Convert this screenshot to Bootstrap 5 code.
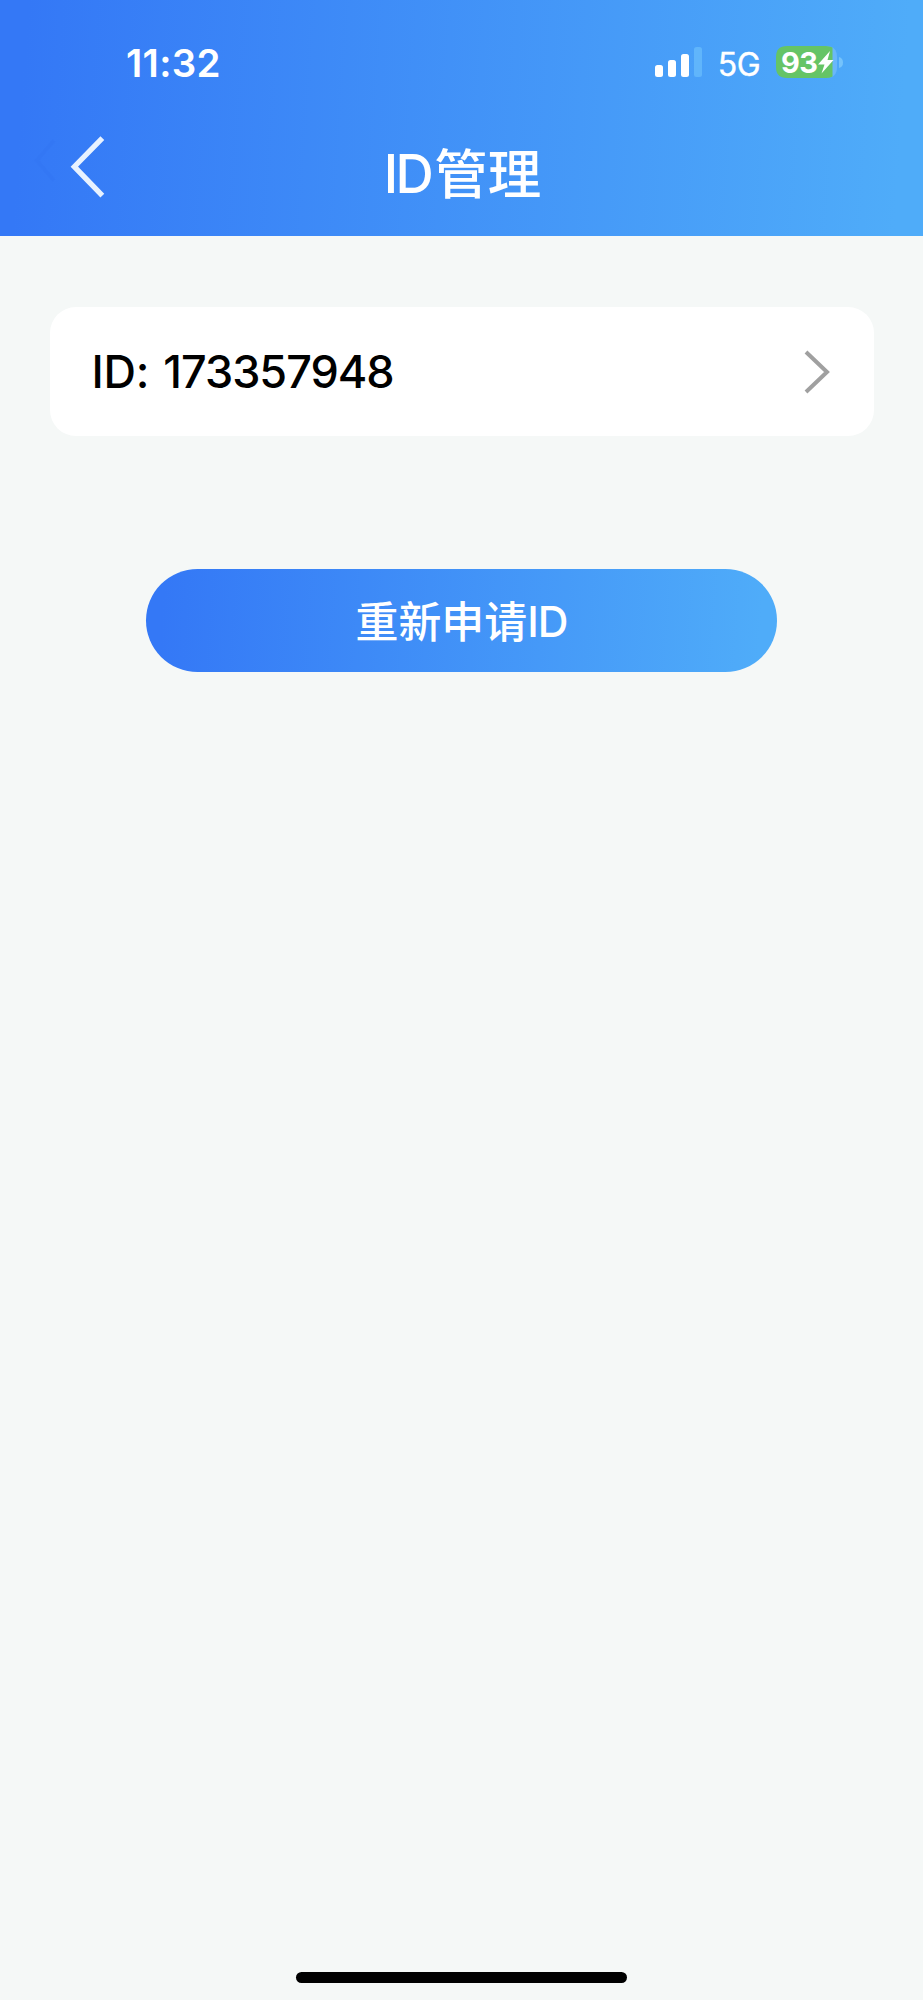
<!DOCTYPE html>
<html lang="zh-CN">
<head>
<meta charset="utf-8">
<meta name="viewport" content="width=device-width, initial-scale=1">
<title>ID管理</title>
<link href="https://cdn.jsdelivr.net/npm/bootstrap@5.3.0/dist/css/bootstrap.min.css" rel="stylesheet">
<style>
body{background:#f5f8f7;font-family:Inter,"Noto Sans CJK SC",sans-serif;color:#000}
.screen{height:2000px}
.blue-fade{background:linear-gradient(94deg,#3478f6 3%,#4facf9 97%)}
.top-area{height:236px}
.status{height:104px;padding:46px 79px 0 126px}
.clock{font-size:38.500px;font-weight:600;line-height:34px;letter-spacing:.3px}
.net{font-size:32px;line-height:37px;margin-left:15px;letter-spacing:-.5px;-webkit-text-stroke:.4px #fff}
.batt{width:56.5px;height:32px;font-size:29px;font-weight:700;line-height:33px;padding-left:5px;letter-spacing:-.5px}
.titlebar{height:132px;padding:0 69px 0 31px}
.page-title{font-size:53.5px;line-height:64px;font-weight:500;padding-top:38px}
.page-title .latin{font-size:53px;letter-spacing:-2.5px;margin-right:3px;vertical-align:1px}
.id-row{margin:71px 49px 0 49.5px;height:129px;border-radius:26px;padding:0 43px 0 42px}
.id-text{font-size:45px;font-weight:500;line-height:60px;letter-spacing:-1px}
.id-label{letter-spacing:-.2px;margin-right:3px}
.apply,.apply:hover{margin:132.5px auto 0;width:631px;height:103px;font-size:42.9px;font-weight:500;line-height:60px;color:#fff;border:0;border-radius:52px}
.apply .latin{font-size:42.5px;letter-spacing:-1px;vertical-align:1px}
.apply .caption-text{padding-top:4px}
.home-bar{width:331px;height:11px;margin-bottom:17px}
</style>
</head>
<body>
<div class="screen d-flex flex-column">
  <header class="top-area blue-fade text-white">
    <div class="status d-flex justify-content-between align-items-start">
      <div class="clock">11:32</div>
      <div class="d-flex align-items-start">
        <svg width="48" height="32" viewBox="0 0 48 32" fill="#fff"><rect y="19" width="8" height="12" rx="2.5"/><rect x="13" y="14" width="8" height="17" rx="2.5"/><rect x="26" y="8" width="8" height="23" rx="2.5"/><rect x="39" y="1" width="8" height="30" rx="2.5" fill="#60b5fb"/></svg>
        <div class="net">5G</div>
        <div class="position-relative ms-3">
          <svg class="d-block" width="68" height="32" viewBox="0 0 68 32"><path d="M10 0H50Q61 0 61 11V21Q61 32 50 32H10Z" fill="#6ab7fa"/><path d="M56.500 1.600V30.400Q54 32 50 32H11Q0 32 0 21V11Q0 0 11 0H50Q54 0 56.500 1.600Z" fill="#65c466"/><path d="M63 11Q67 12 67 16.500T63 22Z" fill="#75c3fb"/><path d="M54 5 42 18.500H48.500L45.500 27.500 57.500 14H51.500Z" fill="#fff"/></svg>
          <div class="batt position-absolute top-0 start-0">93</div>
        </div>
      </div>
    </div>
    <div class="titlebar d-flex align-items-start justify-content-between">
      <svg class="mt-4 pt-1" width="80" height="80" viewBox="0 0 80 80" fill="none"><path d="M22 9 4 30 22 51" stroke="#3376f3" stroke-width="4" opacity=".7"/><path d="M73 6.500 43.500 36.500 73 67" stroke="#e8f2ff" stroke-width="5.600"/></svg>
      <h1 class="page-title m-0"><span class="latin">ID</span>管理</h1>
      <span style="width:40px"></span>
    </div>
  </header>
  <main class="flex-grow-1 d-flex flex-column">
    <a class="id-row bg-white d-flex align-items-center justify-content-between text-decoration-none text-black" href="#">
      <span class="id-text"><span class="id-label">ID:</span> 173357948</span>
      <svg width="30" height="48" viewBox="0 0 30 48" fill="none" stroke="#a0a0a0" stroke-width="4"><path d="M5 4 26 24 5 44"/></svg>
    </a>
    <button class="apply btn blue-fade p-0" type="button"><span class="caption-text d-block">重新申请<span class="latin">ID</span></span></button>
  </main>
  <div class="home-bar bg-black rounded-pill mx-auto"></div>
</div>
<script src="https://cdn.jsdelivr.net/npm/bootstrap@5.3.0/dist/js/bootstrap.bundle.min.js"></script>
</body>
</html>
